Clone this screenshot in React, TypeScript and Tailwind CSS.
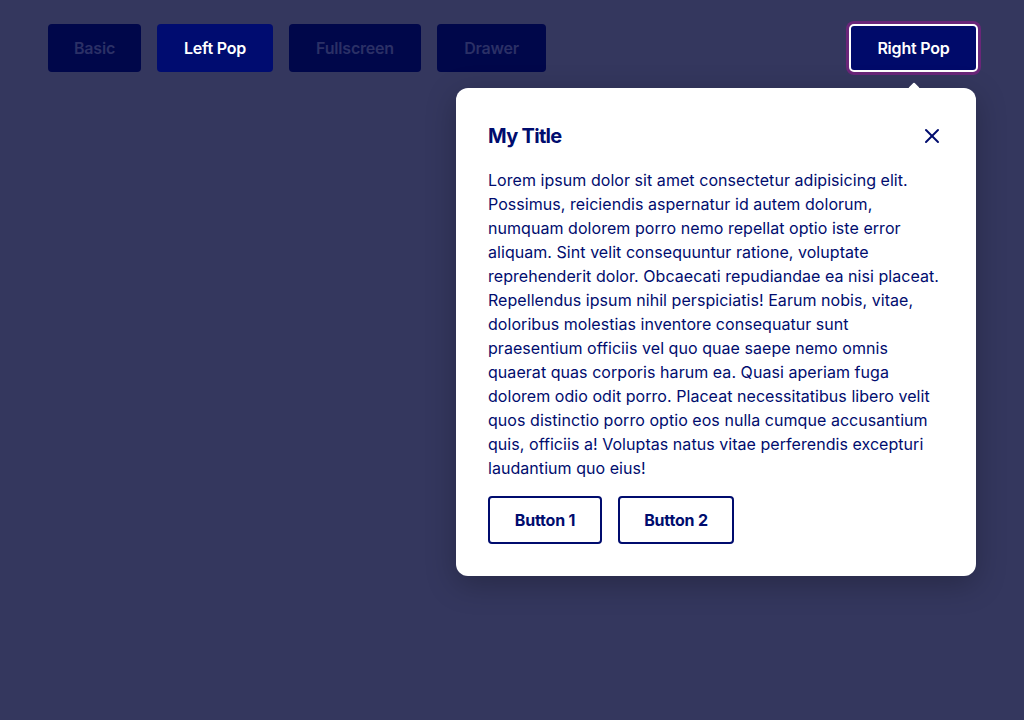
import { X } from "lucide-react";

const tabs = [
  { label: "Basic", active: false, w: "w-[93px]" },
  { label: "Left Pop", active: true, w: "w-[116px]" },
  { label: "Fullscreen", active: false, w: "w-[132px]" },
  { label: "Drawer", active: false, w: "w-[109px]" },
];

// line breaks follow the original rendering
const lines = [
  "Lorem ipsum dolor sit amet consectetur adipisicing elit.",
  "Possimus, reiciendis aspernatur id autem dolorum,",
  "numquam dolorem porro nemo repellat optio iste error",
  "aliquam. Sint velit consequuntur ratione, voluptate",
  "reprehenderit dolor. Obcaecati repudiandae ea nisi placeat.",
  "Repellendus ipsum nihil perspiciatis! Earum nobis, vitae,",
  "doloribus molestias inventore consequatur sunt",
  "praesentium officiis vel quo quae saepe nemo omnis",
  "quaerat quas corporis harum ea. Quasi aperiam fuga",
  "dolorem odio odit porro. Placeat necessitatibus libero velit",
  "quos distinctio porro optio eos nulla cumque accusantium",
  "quis, officiis a! Voluptas natus vitae perferendis excepturi",
  "laudantium quo eius!",
];

export default function App() {
  return (
    <div className="relative h-[720px] w-[1024px] overflow-hidden bg-[#34375e] font-['Inter',sans-serif]">
      <div className="flex items-center justify-between pl-12 pr-[46px] pt-6">
        <div className="flex gap-4">
          {tabs.map((t) => (
            <button
              key={t.label}
              className={`h-12 ${t.w} rounded text-[16px] font-semibold tracking-[-0.2px] ${
                t.active ? "bg-[#000c70] text-white" : "bg-[#00074a] text-[#2b3066]"
              }`}
            >
              {t.label}
            </button>
          ))}
        </div>
        <div className="relative">
          <button className="h-12 w-[129px] rounded-[5px] border-2 border-white bg-[#000a6a] text-[16px] font-semibold tracking-[-0.2px] text-white shadow-[0_0_0_3px_#6a2679]">
            Right Pop
          </button>
          {/* popover */}
          <div className="absolute right-[2px] top-[64px] w-[520px] rounded-xl bg-white p-8 shadow-[0_8px_30px_rgba(0,0,0,0.25)]">
            <div className="absolute -top-[4px] right-[58px] h-2 w-2 rotate-45 rounded-[1px] bg-white" />
            <div className="flex items-center justify-between">
              <h2 className="text-[20px] font-bold leading-8 tracking-[-0.7px] text-[#000c6e]">My Title</h2>
              <X className="h-6 w-6 text-[#000c6e]" strokeWidth={2} />
            </div>
            <p className="mt-4 text-[16px] leading-6 tracking-[0.05px] text-[#000c6e]">
              {lines.map((l) => (
                <span key={l} className="block whitespace-nowrap">
                  {l}
                </span>
              ))}
            </p>
            <div className="mt-4 flex gap-4">
              <button className="h-12 w-[114px] rounded border-2 border-[#000c6e] text-[16px] font-bold tracking-[-0.2px] text-[#000c6e]">
                Button 1
              </button>
              <button className="h-12 w-[116px] rounded border-2 border-[#000c6e] text-[16px] font-bold tracking-[-0.2px] text-[#000c6e]">
                Button 2
              </button>
            </div>
          </div>
        </div>
      </div>
    </div>
  );
}
